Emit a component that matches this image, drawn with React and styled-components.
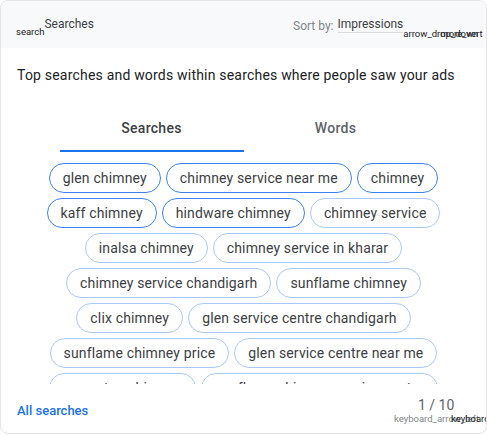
import React from "react";
import styled, { createGlobalStyle } from "styled-components";

const GlobalStyle = createGlobalStyle`
  html, body {
    margin: 0;
    padding: 0;
    background: #ffffff;
  }
  body {
    font-family: Roboto, "Liberation Sans", Arial, sans-serif;
  }
`;

const Card = styled.div`
  width: 487px;
  height: 434px;
  box-sizing: border-box;
  border: 1px solid #e3e5e8;
  border-radius: 8px;
  overflow: hidden;
  display: flex;
  flex-direction: column;
  background: #fff;
`;

const Header = styled.div`
  height: 47px;
  box-sizing: border-box;
  background: #f8f9fa;
  display: flex;
  align-items: flex-start;
  padding: 16px 0 0 15px;
  flex-shrink: 0;
  white-space: nowrap;
`;

const TitleGroup = styled.div`
  display: flex;
  align-items: flex-start;
  color: #3c4043;
  font-size: 12px;
  line-height: 14px;
`;

const IconText = styled.span`
  position: relative;
  display: inline-block;
  font-size: 9.5px;
  line-height: 12px;
  color: ${(p) => p.$color || "#202124"};
  margin-top: ${(p) => p.$drop || 0}px;
  white-space: nowrap;
`;

const OverIcon = styled.span`
  position: absolute;
  left: ${(p) => p.$left}px;
  top: 0;
  color: ${(p) => p.$color || "#202124"};
`;

const SortGroup = styled.div`
  margin-left: auto;
  width: 193px;
  flex-shrink: 0;
  display: flex;
  align-items: flex-start;
`;

const SortLabel = styled.span`
  color: #80868b;
  font-size: 12px;
  line-height: 14px;
  margin-top: 2px;
  margin-right: 4px;
`;

const SortSelect = styled.span`
  color: #3c4043;
  font-size: 12px;
  line-height: 14px;
  border-bottom: 1px solid #dadce0;
  padding-bottom: 1px;
`;

const Description = styled.p`
  margin: 17px 16px 0;
  font-size: 14px;
  line-height: 20px;
  color: #202124;
  letter-spacing: 0.2px;
`;

const Tabs = styled.div`
  display: flex;
  justify-content: center;
  margin-top: 25px;
`;

const Tab = styled.div`
  width: 184px;
  height: 42px;
  box-sizing: border-box;
  display: flex;
  align-items: center;
  justify-content: center;
  font-size: 14px;
  font-weight: 500;
  letter-spacing: 0.3px;
  color: ${(p) => (p.$active ? "#3c4043" : "#5f6368")};
  border-bottom: 2px solid ${(p) => (p.$active ? "#1a73e8" : "transparent")};
  padding-bottom: 4px;
`;

const ChipArea = styled.div`
  margin: 11px auto 0;
  width: 440px;
  height: 221px;
  overflow: hidden;
  display: flex;
  flex-wrap: wrap;
  justify-content: center;
  align-content: flex-start;
  gap: 5px 5px;
`;

const Chip = styled.div`
  height: 30px;
  box-sizing: border-box;
  padding: 0 13px;
  border: 1.5px solid ${(p) => (p.$strong ? "#3b82f0" : "#a9c8f8")};
  border-radius: 15px;
  display: flex;
  align-items: center;
  font-size: 14px;
  letter-spacing: 0.15px;
  color: #3c4043;
  white-space: nowrap;
`;

const Footer = styled.div`
  flex: 1;
  display: flex;
  align-items: center;
  padding-left: 16px;
  white-space: nowrap;
`;

const AllLink = styled.a`
  color: #1a73e8;
  font-size: 13px;
  font-weight: 500;
  text-decoration: none;
  margin-top: 3px;
`;

const Pager = styled.div`
  margin-left: auto;
  width: 92px;
  flex-shrink: 0;
  display: flex;
  flex-direction: column;
  margin-top: 6px;
`;

const PageCount = styled.span`
  color: #5f6368;
  font-size: 14px;
  line-height: 14px;
  margin-left: 24px;
  margin-bottom: 1px;
`;

const chips = [
  ["glen chimney", true],
  ["chimney service near me", true],
  ["chimney", true],
  ["kaff chimney", true],
  ["hindware chimney", true],
  ["chimney service", false],
  ["inalsa chimney", false],
  ["chimney service in kharar", false],
  ["chimney service chandigarh", false],
  ["sunflame chimney", false],
  ["clix chimney", false],
  ["glen service centre chandigarh", false],
  ["sunflame chimney price", false],
  ["glen service centre near me", false],
  ["crompton chimney", false],
  ["sunflame chimney service centre", false],
];

export default function App() {
  return (
    <>
      <GlobalStyle />
      <Card>
        <Header>
          <TitleGroup>
            <IconText $drop={9}>search</IconText>
            <span>Searches</span>
          </TitleGroup>
          <SortGroup>
            <SortLabel>Sort by:</SortLabel>
            <SortSelect>Impressions</SortSelect>
            <IconText $drop={11}>
              arrow_drop_down
              <OverIcon $left={37}>more_vert</OverIcon>
            </IconText>
          </SortGroup>
        </Header>
        <Description>
          Top searches and words within searches where people saw your ads
        </Description>
        <Tabs>
          <Tab $active>Searches</Tab>
          <Tab>Words</Tab>
        </Tabs>
        <ChipArea>
          {chips.map(([label, strong]) => (
            <Chip key={label} $strong={strong}>
              {label}
            </Chip>
          ))}
        </ChipArea>
        <Footer>
          <AllLink href="#">All searches</AllLink>
          <Pager>
            <PageCount>1 / 10</PageCount>
            <IconText $color="#80868b">
              keyboard_arrow_left
              <OverIcon $left={57}>keyboard_arrow_right</OverIcon>
            </IconText>
          </Pager>
        </Footer>
      </Card>
    </>
  );
}
